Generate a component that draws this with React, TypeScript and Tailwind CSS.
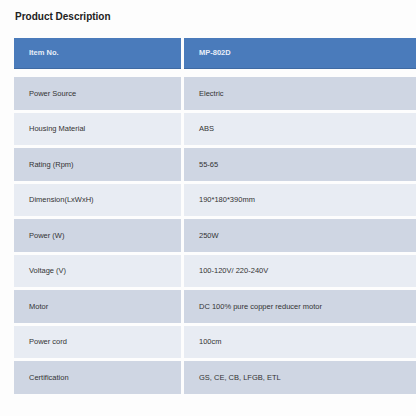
const rows: [string, string][] = [
  ['Power Source', 'Electric'],
  ['Housing Material', 'ABS'],
  ['Rating (Rpm)', '55-65'],
  ['Dimension(LxWxH)', '190*180*390mm'],
  ['Power (W)', '250W'],
  ['Voltage (V)', '100-120V/ 220-240V'],
  ['Motor', 'DC 100% pure copper reducer motor'],
  ['Power cord', '100cm'],
  ['Certification', 'GS, CE, CB, LFGB, ETL'],
];

export default function App() {
  return (
    <div className="h-[416px] w-[416px] overflow-hidden bg-[#fdfdfd] font-['Liberation_Sans',Arial,sans-serif]">
      <h1 className="pl-[15px] pt-[11px] text-[10px] font-bold leading-[12px] text-[#222]">Product Description</h1>

      {/* Header */}
      <div className="mt-[15px] ml-[14px] grid grid-cols-[167px_1fr] gap-x-[3px]">
        <div className="flex h-[31px] items-center border-b border-[#3f6aa3] bg-[#4a7bbb] pl-[15px] text-[7.5px] font-bold text-[#e8eef8]">
          Item No.
        </div>
        <div className="flex h-[31px] items-center border-b border-[#3f6aa3] bg-[#4a7bbb] pl-[15px] text-[7.5px] font-bold text-[#e8eef8]">
          MP-802D
        </div>
      </div>

      {/* Rows */}
      <div className="mt-[8px] ml-[14px] flex flex-col gap-y-[3px]">
        {rows.map(([label, value], i) => (
          <div key={label} className="grid grid-cols-[167px_1fr] gap-x-[3px]">
            <div
              className={`flex h-[32.5px] items-center pl-[15px] text-[7.5px] text-[#333] ${
                i % 2 === 0 ? 'bg-[#cfd6e3]' : 'bg-[#e8ecf3]'
              }`}
            >
              {label}
            </div>
            <div
              className={`flex h-[32.5px] items-center pl-[15px] text-[7.5px] text-[#333] ${
                i % 2 === 0 ? 'bg-[#cfd6e3]' : 'bg-[#e8ecf3]'
              }`}
            >
              {value}
            </div>
          </div>
        ))}
      </div>
    </div>
  );
}
